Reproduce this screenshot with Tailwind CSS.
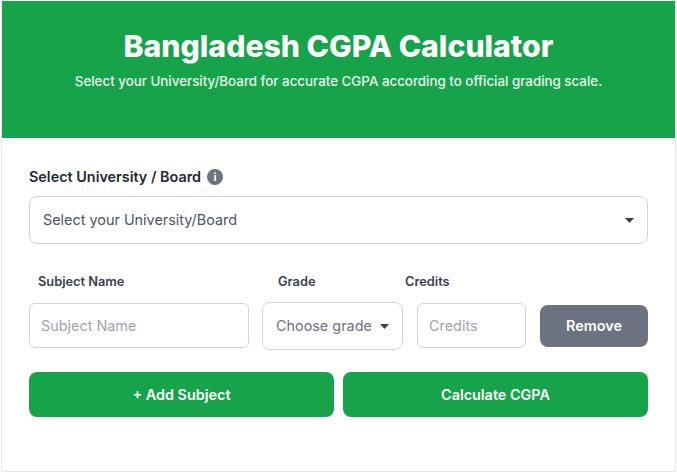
<!DOCTYPE html>
<html lang="en">
<head>
  <meta charset="UTF-8" />
  <meta name="viewport" content="width=device-width, initial-scale=1.0" />
  <title>Bangladesh CGPA Calculator</title>
  <script src="https://cdn.jsdelivr.net/npm/@tailwindcss/browser@4"></script>
</head>
<body class="bg-white font-['Inter',sans-serif] text-[#1f2937]">
  <div class="ml-px mt-px w-[675px] h-[471px] border border-t-0 border-l-[1px] border-[#e5e7eb] bg-white">
    <!-- Header -->
    <header class="h-[137px] bg-[#16a34a] pt-[27px] text-center text-white">
      <h1 class="font-['Inter',sans-serif] text-[30.2px] leading-[36px] font-extrabold">Bangladesh CGPA Calculator</h1>
      <p class="mt-[7px] text-[13.35px] leading-[20px] font-medium text-white/90">Select your University/Board for accurate CGPA according to official grading scale.</p>
    </header>

    <!-- Form -->
    <main class="pl-[27px] pr-[27px]">
      <div class="mt-[29px] flex h-[20px] items-center gap-[6px]">
        <label class="text-[14.4px] leading-[18px] font-semibold">Select University / Board</label>
        <span class="flex h-4 w-4 items-center justify-center rounded-full bg-[#6b7280] text-[11px] leading-none font-bold text-white">i</span>
      </div>
      <div class="mt-[9px] flex h-[48px] w-[619px] items-center justify-between rounded-lg border border-[#d1d5db] pr-[13px] pl-[13px]">
        <span class="text-[14.4px] text-[#4b5563]">Select your University/Board</span>
        <svg class="h-[5px] w-[9px]" viewBox="0 0 10 5" preserveAspectRatio="none"><path d="M0 0h10L5 5z" fill="#374151" /></svg>
      </div>

      <!-- Subject row -->
      <div class="mt-[29px] flex h-[18px] items-center text-[12.8px] font-semibold text-[#374151]">
        <span class="ml-[9px] w-[240px]">Subject Name</span>
        <span class="w-[127px]">Grade</span>
        <span>Credits</span>
      </div>
      <div class="mt-[11px] flex h-[48px] items-center">
        <input type="text" placeholder="Subject Name" class="mb-px h-[45px] w-[220px] rounded-md border border-[#d1d5db] px-[11px] text-[14.4px] placeholder:text-[#9ca3af]" />
        <div class="ml-[13px] flex h-[48px] w-[141px] items-center justify-between rounded-lg border border-[#d1d5db] pr-[13px] pl-[13px]">
          <span class="text-[14.4px] text-[#6b7280]">Choose grade</span>
          <svg class="h-[5px] w-[9px]" viewBox="0 0 10 5" preserveAspectRatio="none"><path d="M0 0h10L5 5z" fill="#374151" /></svg>
        </div>
        <input type="text" placeholder="Credits" class="mb-px ml-[14px] h-[45px] w-[109px] rounded-md border border-[#d1d5db] px-[11px] text-[14.4px] placeholder:text-[#9ca3af]" />
        <button class="ml-[14px] h-[42px] w-[108px] rounded-lg bg-[#6b7280] text-[14.4px] font-semibold text-white">Remove</button>
      </div>

      <!-- Actions -->
      <div class="mt-[22px] flex gap-[9px]">
        <button class="h-[45px] w-[305px] rounded-lg bg-[#16a34a] text-[14.4px] font-semibold text-white">+ Add Subject</button>
        <button class="h-[45px] w-[305px] rounded-lg bg-[#16a34a] text-[14.4px] font-semibold text-white">Calculate CGPA</button>
      </div>
    </main>
  </div>
</body>
</html>
